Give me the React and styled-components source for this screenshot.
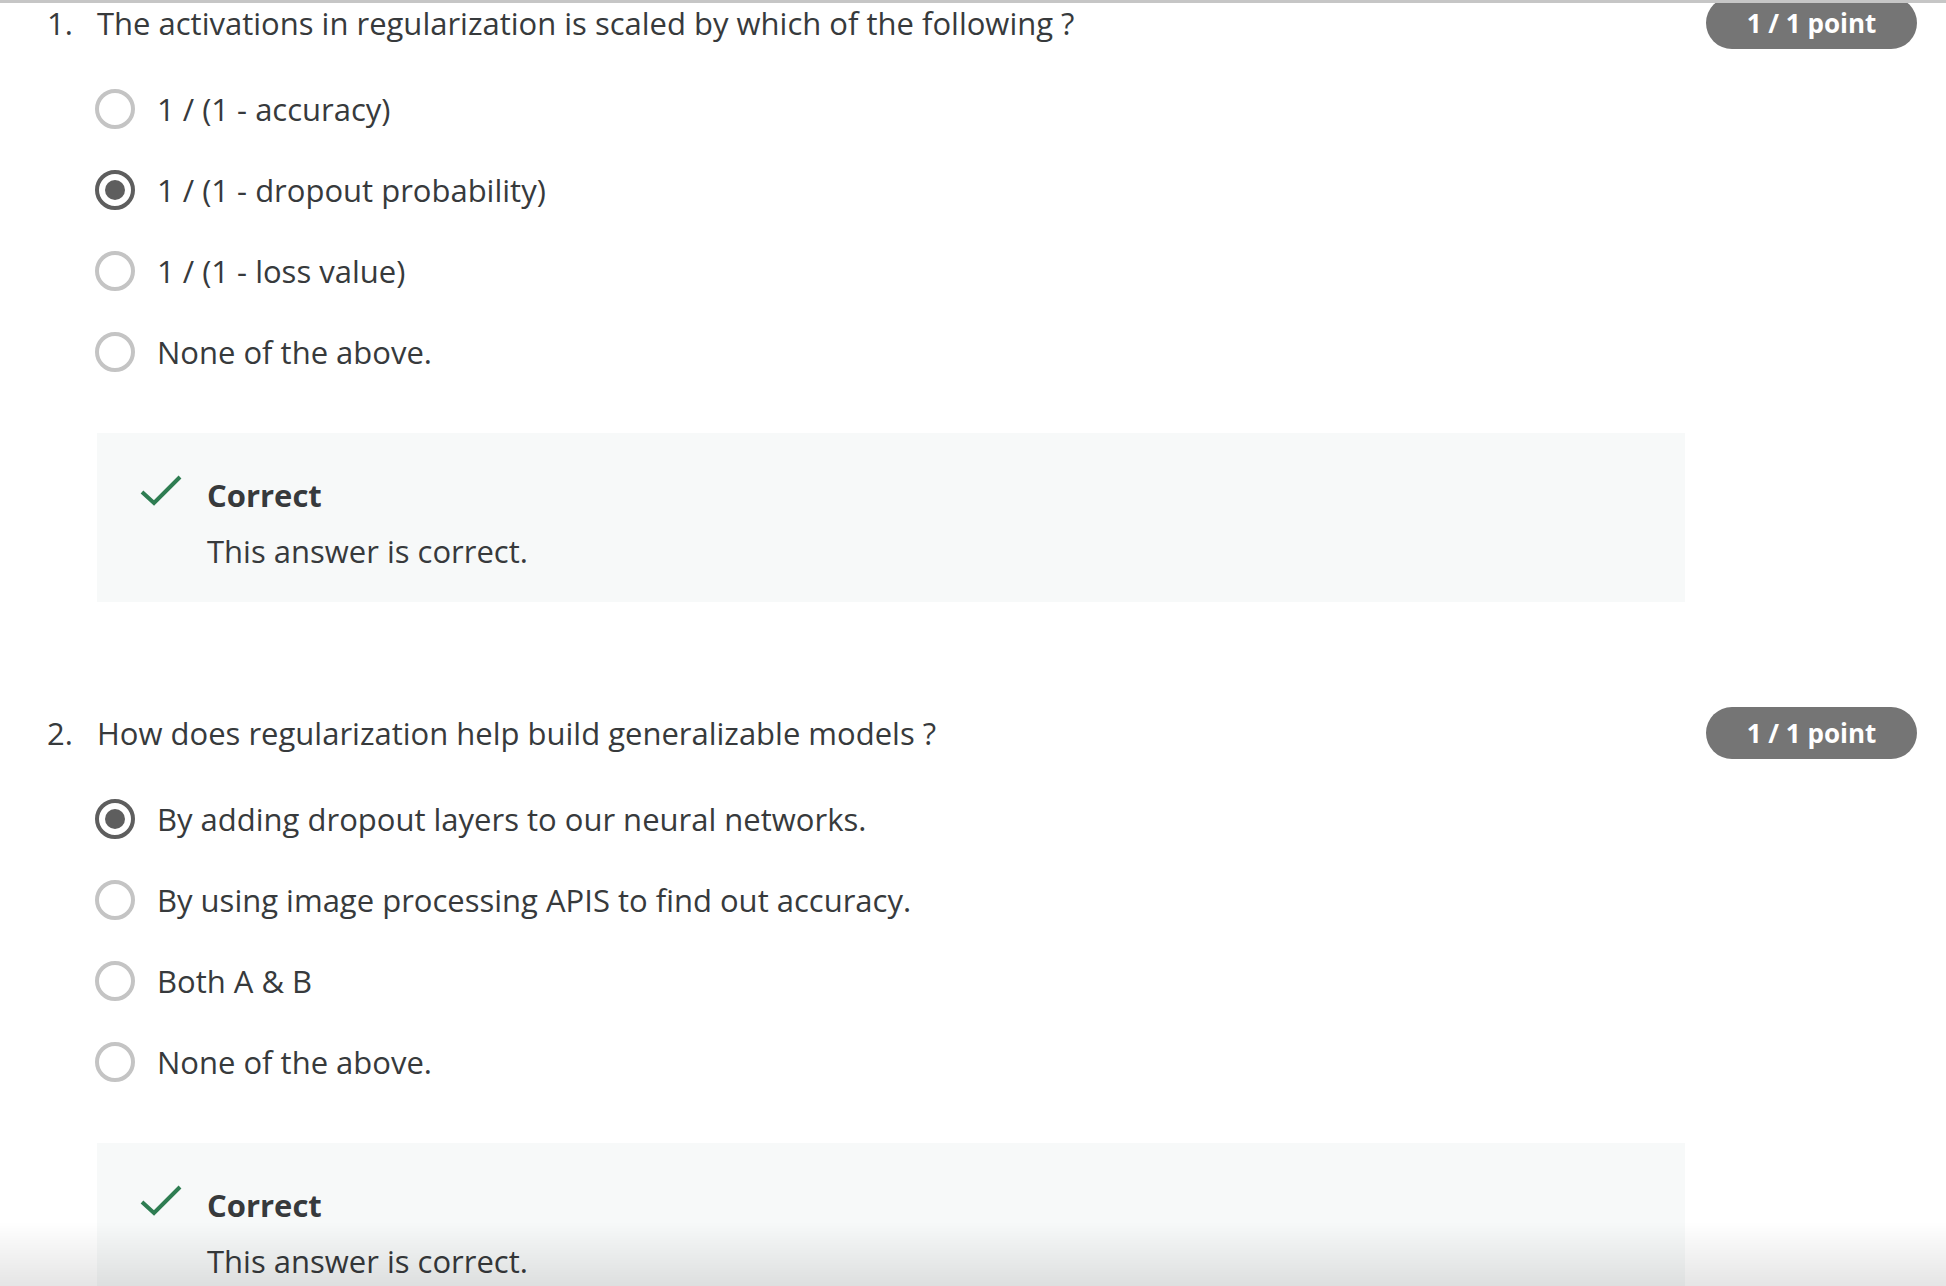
import styled, { createGlobalStyle } from "styled-components";

const GlobalStyle = createGlobalStyle`
  html, body {
    margin: 0;
    padding: 0;
    background: #ffffff;
  }
  body {
    font-family: "Open Sans", "Noto Sans", sans-serif;
    color: #373a3c;
    overflow: hidden;
  }
`;

const TopRule = styled.div`
  position: fixed;
  top: 0;
  left: 0;
  right: 0;
  height: 3px;
  background: #c6c6c6;
  z-index: 5;
`;

const BottomShade = styled.div`
  position: fixed;
  left: 0;
  right: 0;
  bottom: 0;
  height: 64px;
  background: linear-gradient(rgba(0, 0, 0, 0), rgba(0, 0, 0, 0.1));
  pointer-events: none;
  z-index: 5;
`;

const Page = styled.main`
  padding: 0 29px 0 47px;
  margin-top: -3px;
`;

const Question = styled.section`
  margin-bottom: 105px;
`;

const Header = styled.div`
  display: flex;
  align-items: center;
  height: 52px;
`;

const Number = styled.span`
  width: 50px;
  flex: none;
  font-size: 31px;
  line-height: 40px;
`;

const Prompt = styled.h2`
  flex: 1;
  margin: 0;
  font-size: 31px;
  font-weight: 400;
  line-height: 40px;
`;

const Badge = styled.span`
  flex: none;
  width: 211px;
  height: 52px;
  border-radius: 26px;
  background: #757575;
  color: #ffffff;
  font-size: 26px;
  font-weight: 700;
  display: flex;
  align-items: center;
  justify-content: center;
`;

const Options = styled.ul`
  list-style: none;
  margin: 19px 0 0;
  padding: 0 0 0 48px;
`;

const Option = styled.li`
  display: flex;
  align-items: center;
  gap: 22px;
  height: 81px;
  font-size: 31px;
`;

const Radio = styled.span`
  flex: none;
  box-sizing: border-box;
  width: 40px;
  height: 40px;
  border-radius: 50%;
  border: 4px solid ${(p) => (p.$checked ? "#5e5e5e" : "#c4c4c4")};
  display: flex;
  align-items: center;
  justify-content: center;

  &::after {
    content: "";
    display: ${(p) => (p.$checked ? "block" : "none")};
    width: 20px;
    height: 20px;
    border-radius: 50%;
    background: #5e5e5e;
  }
`;

const Feedback = styled.div`
  margin: 41px 0 0 50px;
  width: 1588px;
  box-sizing: border-box;
  background: #f7f9f9;
  padding: 42px 0 31px 42px;
  display: flex;
  gap: 24px;
`;

const CheckIcon = styled.svg`
  flex: none;
  width: 44px;
  height: 33px;
  margin-top: -2px;
`;

const FeedbackBody = styled.div`
  display: flex;
  flex-direction: column;
  gap: 16px;
`;

const FeedbackTitle = styled.strong`
  font-size: 31px;
  line-height: 40px;
  font-weight: 700;
`;

const FeedbackText = styled.span`
  font-size: 31px;
  line-height: 40px;
`;

const questions = [
  {
    n: 1,
    text: "The activations in regularization is scaled by which of the following ?",
    options: [
      "1 / (1 - accuracy)",
      "1 / (1 - dropout probability)",
      "1 / (1 - loss value)",
      "None of the above.",
    ],
    picked: 1,
  },
  {
    n: 2,
    text: "How does regularization help build generalizable models ?",
    options: [
      "By adding dropout layers to our neural networks.",
      "By using image processing APIS to find out accuracy.",
      "Both A & B",
      "None of the above.",
    ],
    picked: 0,
  },
];

function App() {
  return (
    <>
      <GlobalStyle />
      <TopRule />
      <Page>
        {questions.map((q) => (
          <Question key={q.n}>
            <Header>
              <Number>{q.n}.</Number>
              <Prompt>{q.text}</Prompt>
              <Badge>1 / 1 point</Badge>
            </Header>
            <Options>
              {q.options.map((o, i) => (
                <Option key={o}>
                  <Radio $checked={i === q.picked} />
                  {o}
                </Option>
              ))}
            </Options>
            <Feedback>
              <CheckIcon viewBox="0 0 44 33">
                <path d="M3 19 L15 30 L41 4" fill="none" stroke="#2e7d52" strokeWidth="4" />
              </CheckIcon>
              <FeedbackBody>
                <FeedbackTitle>Correct</FeedbackTitle>
                <FeedbackText>This answer is correct.</FeedbackText>
              </FeedbackBody>
            </Feedback>
          </Question>
        ))}
      </Page>
      <BottomShade />
    </>
  );
}

export default App;
